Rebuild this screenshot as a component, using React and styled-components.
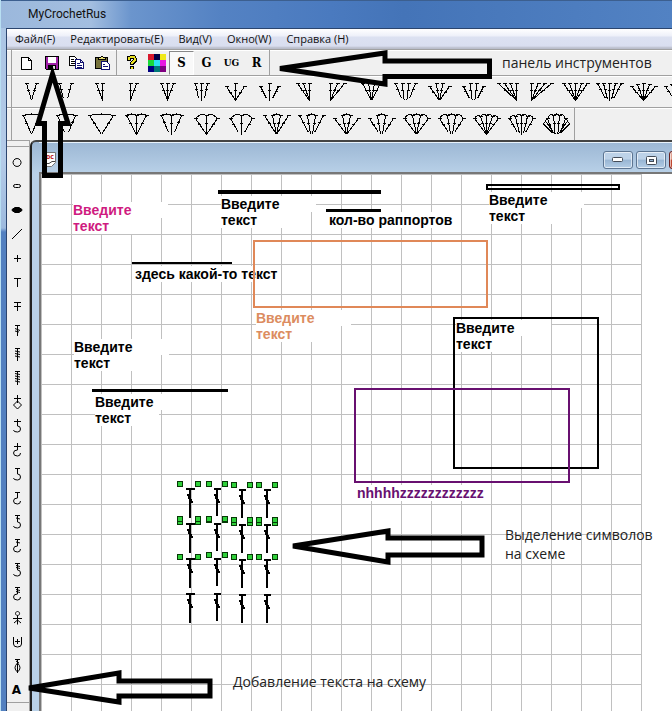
import React from "react";
import styled, { createGlobalStyle } from "styled-components";

const GlobalStyle = createGlobalStyle`
  * {
    box-sizing: border-box;
  }
  body {
    margin: 0;
    overflow: hidden;
    font-family: "Open Sans", "Noto Sans", sans-serif;
  }
  button {
    font: inherit;
    color: inherit;
    border: 0;
    padding: 0;
    background: none;
  }
`;

const Window = styled.div`
  position: relative;
  display: flex;
  flex-direction: column;
  height: 100vh;
  padding-left: 6px;
  overflow: hidden;
  background: linear-gradient(#a9c4e4 0, #b4cbe8 160px, #9dbade 228px, #5280c0 232px, #5280c0 100%);
  border-left: 1px solid #b8dff2;
`;

const TitleBar = styled.header`
  height: 28px;
  flex: none;
  margin-left: -6px;
  padding-left: 27px;
  border-top: 1px solid #3c5f8f;
  background: linear-gradient(90deg, #9bb8dc 0, #a3bee0 90px, #6b95cd 130px, #5482c3 220px, #4a7abf 330px, #4474b8 60%, #5282c3 100%);
`;

const Title = styled.h1`
  margin: 0;
  font-family: Roboto, "Open Sans", sans-serif;
  font-size: 12px;
  font-weight: 400;
  line-height: 26px;
  color: #111;
`;

const Body = styled.div`
  flex: 1;
  min-height: 0;
  display: flex;
  flex-direction: column;
  background: #f0f0f0;
  border-left: 1px solid #2b456e;
  border-top: 1px solid #2b456e;
  margin-left: -1px;
`;

const Menu = styled.nav`
  display: flex;
  gap: 15px;
  height: 20px;
  flex: none;
  padding-left: 8px;
  background: linear-gradient(#fff 0, #eef0f9 7px, #dce1f1 8px, #d9deef 17px, #b9bdca 19px);

  button {
    font-size: 11px;
    line-height: 20px;
    color: #111;
  }
`;

const ToolRow = styled.div`
  display: flex;
  align-items: center;
  flex: none;
  height: ${(p) => p.$height}px;
  padding-left: 2px;
  overflow: hidden;
  border-top: 1px solid #a0a0a0;
  box-shadow: inset 0 1px #fff;
`;

const Separator = styled.span`
  flex: none;
  width: 1px;
  height: 100%;
  margin: 0 ${(p) => p.$gap || 0}px;
  background: #a0a0a0;
`;

const ToolButton = styled.button`
  flex: none;
  display: flex;
  align-items: center;
  justify-content: center;
  width: 25px;
  height: 24px;
  font-family: "DejaVu Serif Condensed", "DejaVu Serif", serif;
  font-size: ${(p) => (p.$small ? 10 : 13)}px;
  font-weight: 700;
  ${(p) =>
    p.$pressed &&
    `
    background: #f9f9f9;
    border: 1px solid #fff;
    border-top-color: #888;
    border-left-color: #888;
  `}
`;

const StitchButton = styled.button`
  flex: none;
  width: ${(p) => p.$width}px;
  height: 30px;

  svg {
    display: block;
  }
`;

const Ink = styled.svg`
  fill: none;
  stroke: #000;
  stroke-width: 1;
  shape-rendering: ${(p) => (p.$smooth ? "auto" : "crispEdges")};
`;

const Workspace = styled.div`
  flex: 1;
  min-height: 0;
  display: flex;
`;

const Palette = styled.aside`
  flex: none;
  width: 23px;
  border-top: 1px solid #a0a0a0;
  border-right: 1px solid #a0a0a0;
`;

const PaletteTools = styled.div`
  display: flex;
  flex-direction: column;
  align-items: center;
  margin-top: 5px;
  padding: 3px 3px 0 0;
  border-top: 1px solid #a0a0a0;
  border-bottom: 1px solid #a0a0a0;

  button {
    width: 20px;
    height: 24px;
    font: 700 12px "DejaVu Sans", sans-serif;
  }
  svg {
    display: block;
  }
`;

const Child = styled.section`
  flex: 1;
  min-width: 0;
  display: flex;
  flex-direction: column;
  padding-left: 7px;
  border-left: 2px solid #222;
  border-top: 2px solid #444;
  border-top-left-radius: 6px;
  background: linear-gradient(#9cb7d4, #b9d1e8 32px, #b9d1e8);
`;

const ChildTitle = styled.div`
  display: flex;
  align-items: center;
  gap: 3px;
  flex: none;
  height: 30px;
  padding: 5px 0 0 5px;
  overflow: hidden;
  border-top: 1px solid #e8f2fb;
`;

const Spacer = styled.span`
  flex: 1;
`;

const CaptionButton = styled.button`
  flex: none;
  width: ${(p) => (p.$close ? 46 : 30)}px;
  height: 18px;
  display: flex;
  align-items: center;
  justify-content: center;
  margin-right: ${(p) => (p.$close ? -43 : 0)}px;
  border: 1px solid ${(p) => (p.$close ? "#6a2020" : "#5d7592")};
  border-radius: 3px;
  box-shadow: inset 0 0 0 1px rgba(255, 255, 255, 0.6);
  background: ${(p) =>
    p.$close
      ? "linear-gradient(#e0a090 45%, #c04830 50%)"
      : "linear-gradient(#bdd2e8 45%, #98b5d3 50%, #b4cde6)"};
`;

const Canvas = styled.main`
  position: relative;
  flex: 1;
  min-height: 0;
  overflow: hidden;
  background: #fff;
  border-left: 2px solid #777;
  border-top: 2px solid #777;
`;

const Paper = styled.div`
  width: 601px;
  height: 100%;
  background: linear-gradient(90deg, #c0c0c0 1px, transparent 1px) 0 0 / 30px 30px,
    linear-gradient(#c0c0c0 1px, transparent 1px) 0 0 / 30px 30px;
`;

const Label = styled.p`
  position: absolute;
  left: ${(p) => p.$x}px;
  top: ${(p) => p.$y}px;
  margin: 0;
  color: ${(p) => p.$color || "#000"};
  font: 700 14px/16px "Liberation Sans", Arial, sans-serif;
  white-space: nowrap;

  span {
    display: block;
    width: max-content;
    min-width: ${(p) => (p.$wide ? 64 : 0)}px;
    background: #fff;
  }
  span:first-child {
    min-width: ${(p) => (p.$wide ? 95 : 0)}px;
  }
`;

const Shape = styled.div`
  position: absolute;
  left: ${(p) => p.$x}px;
  top: ${(p) => p.$y}px;
  width: ${(p) => p.$w}px;
  height: ${(p) => p.$h}px;
  border: ${(p) => (p.$solid ? 0 : 2)}px solid ${(p) => p.$color || "#000"};
  background: ${(p) => (p.$solid ? "#000" : "none")};
`;

const Stitches = styled.svg`
  position: absolute;
  left: 0;
  top: 0;
  width: 601px;
  height: 537px;
  shape-rendering: crispEdges;
`;

const Arrows = styled.svg`
  position: absolute;
  left: 0;
  top: 0;
  width: 672px;
  height: 711px;
  fill: none;
  stroke: #000;
  stroke-width: 5;
  pointer-events: none;
`;

const Note = styled.p`
  position: absolute;
  left: ${(p) => p.$x}px;
  top: ${(p) => p.$y}px;
  margin: 0;
  font-size: 14px;
  line-height: 19px;
  color: #222;
  white-space: pre;
`;

// n: stems, w: half width, split: separate feet, fan: outer stems lower,
// lean: -1/1 for a one-sided bunch, arcs: "all" or "mid"
const topRow = [
  { n: 2, w: 5 },
  { n: 2, w: 6, split: 2 },
  { n: 2, w: 3, lean: -1 },
  { n: 2, w: 3, lean: 1 },
  { n: 3, w: 6 },
  { n: 3, w: 6, split: 3 },
  { n: 3, w: 9, fan: true },
  { n: 3, w: 9, fan: true, split: 3 },
  { n: 3, w: 6, lean: -1 },
  { n: 3, w: 7, lean: 1 },
  { n: 4, w: 9 },
  { n: 4, w: 10, split: 4 },
  { n: 4, w: 10, fan: true },
  { n: 4, w: 10, fan: true, split: 4 },
  { n: 4, w: 9, lean: -1 },
  { n: 4, w: 10, lean: 1 },
  { n: 5, w: 12 },
  { n: 5, w: 12, split: 4 },
  { n: 5, w: 12, fan: true },
  { n: 5, w: 12, fan: true, split: 4 },
];

const bottomRow = [
  { n: 2, w: 8, arcs: "all" },
  { n: 2, w: 9, arcs: "all", split: 2 },
  { n: 2, w: 12, arcs: "all" },
  { n: 3, w: 10, arcs: "all" },
  { n: 3, w: 10, arcs: "all", split: 3 },
  { n: 3, w: 11, arcs: "all", fan: true },
  { n: 3, w: 11, arcs: "all", fan: true, split: 3 },
  { n: 4, w: 12, arcs: "mid" },
  { n: 4, w: 12, arcs: "mid", split: 3 },
  { n: 4, w: 12, arcs: "mid", fan: true },
  { n: 4, w: 12, arcs: "mid", fan: true, split: 3 },
  { n: 4, w: 12, arcs: "all", fan: true },
  { n: 4, w: 12, arcs: "all", fan: true, split: 3 },
  { n: 5, w: 12, arcs: "all", fan: true },
  { n: 5, w: 12, arcs: "all", fan: true, split: 4 },
  { n: 4, w: 9, arcs: "all", fan: true, split: 4, puff: true },
];

const Fan = ({ n, w, split = 0, fan, lean, arcs, puff, width, top, foot }) => {
  const cx = Math.floor(width / 2) + 0.5;
  const stems = Array.from({ length: n }, (_, i) => {
    const t = (i / (n - 1)) * 2 - 1;
    const drop = fan ? Math.round(t * t * 3) : 0;
    return {
      x: cx + t * w,
      y: top + drop + 0.5,
      fx: lean ? cx - lean * w : cx + t * split,
      fy: foot + 0.5 - (split ? Math.round(t * t * 2) : 0),
    };
  });
  let d = "";
  stems.forEach(({ x, y, fx, fy }) => {
    d += `M${x} ${y}L${fx} ${fy}M${x - 1.5} ${y}h4`;
    d += `M${x + (fx - x) * 0.4 - 1.5} ${y + (fy - y) * 0.4}h3`;
  });
  stems.slice(1).forEach((s, i) => {
    const prev = stems[i];
    const mid = i === Math.floor((n - 1) / 2);
    if (arcs === "all" || (arcs === "mid" && mid)) {
      d += `M${prev.x} ${prev.y}Q${(prev.x + s.x) / 2} ${Math.min(prev.y, s.y) - 3} ${s.x} ${s.y}`;
    }
  });
  return (
    <Ink width={width} height="30" viewBox={`0 0 ${width} 30`}>
      <path d={d} />
      {puff && (
        <path
          d={`M${cx - 9} ${top + 3}L${cx - 13} 15L${cx - 4} 24M${cx + 9} ${top + 3}L${cx + 13} 15L${cx + 4} 24
            M${cx - 11} 12L${cx - 2} 25M${cx + 11} 12L${cx + 2} 25`}
        />
      )}
    </Ink>
  );
};

const hookRight = "q3 0 3 3t-3 3q-4 0-4-2";
const hookLeft = "q-4 0-4 3t4 3q3 0 3-3";

const paletteTools = [
  { name: "Воздушная петля", d: "M10 8.500a4 4 0 1 0 .1 0z" },
  { name: "Малая петля", d: "M8.500 10.500h3q2 0 2 1.500t-2 1.500h-3q-2 0-2-1.500t2-1.500z" },
  { name: "Соединительный столбик", d: "M8 9.500h4l3 2v1l-3 2h-4l-3-2v-1z", fill: true },
  { name: "Линия", d: "M5 17L15 7" },
  { name: "Столбик без накида", d: "M7 12.500h7M10.500 9v7" },
  { name: "Полустолбик", d: "M7 8.500h7M10.500 8v9" },
  { name: "Столбик с накидом", d: "M7 8.500h7M10.500 8v9M7 12.500h7" },
  { name: "Столбик с 2 накидами", d: "M8 7.500h5M10.500 7v11M8 10.500l5 2M8 13l4 1" },
  { name: "Столбик с 3 накидами", d: "M8 6.500h5M10.500 6v13M8 9l5 1M8 11.500l5 1M8 14l5 1" },
  { name: "Столбик с 4 накидами", d: "M8 5.500h5M10.500 5v14M8 7.500l5 1M8 10l5 1M8 12.500l5 1M8 15l5 1" },
  { name: "Ромб", d: "M7 8.500h7M10.500 5v8M10.500 11l-4 4l4 4l4-4z" },
  { name: "Рельефный вправо", d: "M7 7.500h7M10.500 5v7" + hookRight },
  { name: "Рельефный влево", d: "M7 8.500h7M10.500 5v7" + hookLeft },
  { name: "Крючок вправо", d: "M8 6.500h5M10.500 6v6" + hookRight },
  { name: "Крючок влево", d: "M8 6.500h5M10.500 6v6" + hookLeft },
  { name: "Крючок вправо, накид", d: "M8 5.500h5M10.500 5v7M9 8l4 1" + "M10.500 12" + hookRight },
  { name: "Крючок влево, накид", d: "M8 5.500h5M10.500 5v7M9 8l4 1" + "M10.500 12" + hookLeft },
  { name: "Крючок вправо, 2 накида", d: "M8 5.500h5M10.500 5v7M9 7.500l4 1M9 9.500l4 1M10.500 12" + hookRight },
  { name: "Крючок влево, 2 накида", d: "M8 5.500h5M10.500 5v7M9 7.500l4 1M9 9.500l4 1M10.500 12" + hookLeft },
  { name: "Рачий шаг", d: "M10.500 5.500a2 2 0 1 0 .1 0zM6 12.500h9M10.500 9.500v9M7 17l3.500-3l3.500 3" },
  { name: "Чаша", d: "M6.500 7v7q0 3 4 3t4-3V7M8 11.500h5M10.500 9v5" },
  { name: "Пышный столбик", d: "M8 5.500h5M10.500 5v14M9 7l3 2M10.500 9q-5 5 0 9M10.500 9q5 5 0 9" },
];

const labels = [
  { x: 32, y: 28, color: "#cf1b80" },
  { x: 180, y: 22 },
  { x: 448, y: 18 },
  { x: 288, y: 38, text: "кол-во раппортов" },
  { x: 94, y: 92, text: "здесь какой-то текст" },
  { x: 215, y: 136, color: "#dc8c60" },
  { x: 33, y: 165 },
  { x: 415, y: 146 },
  { x: 54, y: 220 },
  { x: 316, y: 311, color: "#681070", text: "nhhhhzzzzzzzzzzzz" },
];

const shapes = [
  { x: 177, y: 16, w: 163, h: 4, solid: true },
  { x: 285, y: 35, w: 55, h: 3, solid: true },
  { x: 91, y: 88, w: 100, h: 2, solid: true },
  { x: 51, y: 215, w: 136, h: 3, solid: true },
  { x: 445, y: 10, w: 134, h: 6 },
  { x: 212, y: 66, w: 235, h: 68, color: "#e08858" },
  { x: 412, y: 143, w: 146, h: 152 },
  { x: 313, y: 214, w: 216, h: 95, color: "#681070" },
];

const stitchColumns = [
  { x: 149, y: 314, len: 30, bar: 9 },
  { x: 176, y: 314, len: 28, bar: 7 },
  { x: 201, y: 315, len: 29, bar: 7 },
  { x: 226, y: 315, len: 29, bar: 7 },
];

const handlePairs = [
  { xs: [139, 157], ys: [310, 348, 345, 383] },
  { xs: [168, 184], ys: [310, 346, 345, 381] },
  { xs: [193, 209], ys: [311, 349, 346, 383] },
  { xs: [218, 234], ys: [311, 349, 346, 383] },
];

const colors = ["#d8182c", "#000048", "#f0e818", "#18d838", "#28e0f0", "#e818e0", "#000080", "#007878", "#800080"];

const DrawingArea = () => (
  <Canvas>
    <Paper />
    {labels.map(({ x, y, color, text }) => (
      <Label key={`${x}-${y}`} $x={x} $y={y} $color={color} $wide={!text}>
        <span>{text || "Введите"}</span>
        {!text && <span>текст</span>}
      </Label>
    ))}
    {shapes.map(({ x, y, w, h, color, solid }) => (
      <Shape key={`${x}-${y}`} $x={x} $y={y} $w={w} $h={h} $color={color} $solid={solid} />
    ))}
    <Stitches>
      {stitchColumns.map(({ x, y, len, bar }) =>
        [0, 35, 70, 105].map((dy) => (
          <g key={`${x}-${dy}`} transform={`translate(${x} ${y + dy})`}>
            <rect x={-(bar - 1) / 2} width={bar} height="2" />
            <rect x="-1" width="2" height={len} />
            <path d="M-3 6h2v3h-1v-1h-1zM-2 9h2v3h-1zM0 11h2v2h1v2h-2z" />
          </g>
        ))
      )}
      {handlePairs.map(({ xs, ys }) =>
        ys.map((y) =>
          xs.map((x) => (
            <rect key={`${x}-${y}`} x={x - 2.5} y={y - 2.5} width="5" height="5" fill="#2fd03a" stroke="#063806" />
          ))
        )
      )}
    </Stitches>
  </Canvas>
);

export default function App() {
  return (
    <Window>
      <GlobalStyle />
      <TitleBar>
        <Title>MyCrochetRus</Title>
      </TitleBar>
      <Body>
        <Menu>
          {["Файл(F)", "Редактировать(E)", "Вид(V)", "Окно(W)", "Справка (H)"].map((item) => (
            <button key={item}>{item}</button>
          ))}
        </Menu>

        <ToolRow $height={26}>
          <Separator $gap={2} />
          <ToolButton aria-label="Новый">
            <Ink width="13" height="16" viewBox="0 0 13 16">
              <path fill="#fff" d="M1.500 2.500h7l3 3v9h-10zM8.500 2.500v3h3" />
            </Ink>
          </ToolButton>
          <ToolButton aria-label="Сохранить">
            <Ink width="14" height="14" viewBox="0 0 14 14">
              <path fill="#a020a8" d="M.5.500h13v13h-12l-1-1z" />
              <path fill="#fff" stroke="none" d="M3 1h8v6H3z" />
              <path fill="#000" stroke="none" d="M3 9h8v5H3z" />
              <path fill="#ddd" stroke="none" d="M8 10h2v3H8z" />
            </Ink>
          </ToolButton>
          <ToolButton aria-label="Копировать">
            <Ink width="16" height="15" viewBox="0 0 16 15">
              <path fill="#fff" d="M.5 1.500h5l3 3v6h-8zM2 4.500h3M2 6.500h4M2 8.500h4" />
              <path fill="#fff" stroke="#101070" d="M6.500 4.500h5l3 3v6h-8zM11.500 4.500v3h3M8 8.500h3M8 10.500h5M8 12h5" />
            </Ink>
          </ToolButton>
          <ToolButton aria-label="Вставить">
            <Ink width="16" height="16" viewBox="0 0 16 16">
              <path fill="#77733c" d="M1.500 2.500h12v11h-12z" />
              <path fill="#e8e070" d="M4.500 4.500v-2h2l1-1h1l1 1h2v2z" />
              <path fill="#fff" stroke="#101070" d="M7.500 6.500h5l3 3v5h-8zM9 9.500h2M9 11.500h5" />
            </Ink>
          </ToolButton>
          <Separator $gap={2} />
          <ToolButton aria-label="Справка">
            <Ink width="12" height="15" viewBox="0 0 12 15">
              <path strokeWidth="4" d="M3 6V3l2-1h3l1 2v2L6 8v2M6 11v3" />
              <path stroke="#e8e020" strokeWidth="2" d="M3 5V3l2-1h3l1 2v1L6 8v1M6 12v2" />
            </Ink>
          </ToolButton>
          <ToolButton aria-label="Палитра">
            <svg width="18" height="18" viewBox="0 0 18 18" shapeRendering="crispEdges">
              {colors.map((c, i) => (
                <rect key={c} x={(i % 3) * 6} y={Math.floor(i / 3) * 6} width="6" height="6" fill={c} />
              ))}
            </svg>
          </ToolButton>
          <ToolButton $pressed>S</ToolButton>
          <ToolButton>G</ToolButton>
          <ToolButton $small>UG</ToolButton>
          <ToolButton>R</ToolButton>
          <Separator />
        </ToolRow>

        <ToolRow $height={32}>
          <Separator $gap={2} />
          {topRow.map((fan, i) => (
            <StitchButton key={i} $width={34} aria-label={`Раппорт ${i + 1}`}>
              <Fan {...fan} width={34} top={6} foot={23} />
            </StitchButton>
          ))}
        </ToolRow>

        <ToolRow $height={33}>
          <Separator $gap={2} />
          {bottomRow.map((fan, i) => (
            <StitchButton key={i} $width={35} aria-label={`Веер ${i + 1}`}>
              <Fan {...fan} width={35} top={6} foot={25} />
            </StitchButton>
          ))}
          <Separator />
        </ToolRow>

        <Workspace>
          <Palette>
            <PaletteTools>
              {paletteTools.map(({ name, d, fill }) => (
                <button key={name} aria-label={name}>
                  <Ink $smooth width="20" height="24" viewBox="0 0 20 24">
                    <path d={d} fill={fill ? "#000" : "none"} />
                  </Ink>
                </button>
              ))}
              <button>A</button>
            </PaletteTools>
          </Palette>

          <Child>
            <ChildTitle>
              <svg width="14" height="16" viewBox="0 0 14 16">
                <path fill="#fff" stroke="#777" d="M.5.500h11v10l-4 4h-7z" />
                <text x="2" y="7" fontSize="7" fontWeight="700" fill="#c02020">oc</text>
                <path fill="none" stroke="#444" d="M1 11.500h4l3-2h3" />
              </svg>
              <Spacer />
              <CaptionButton aria-label="Свернуть">
                <svg width="12" height="6">
                  <rect x=".5" y=".5" width="10" height="4" rx="1" fill="#fff" stroke="#444c58" />
                </svg>
              </CaptionButton>
              <CaptionButton aria-label="Развернуть">
                <svg width="11" height="9">
                  <rect x=".5" y=".5" width="10" height="8" rx="1" fill="#fff" stroke="#444c58" />
                  <rect x="3.500" y="3.500" width="4" height="2" fill="#8fb0d0" stroke="#444c58" />
                </svg>
              </CaptionButton>
              <CaptionButton $close aria-label="Закрыть" />
            </ChildTitle>
            <DrawingArea />
          </Child>
        </Workspace>
      </Body>

      <Arrows viewBox="0 0 672 711">
        <path d="M279 68.500L384 53v8h104.500v15.500H384V84z" />
        <path d="M51.500 74L67 123.500h-7.500v52h-16v-52H37z" />
        <path d="M292 546L387 531v7h94v17h-94v7z" />
        <path d="M28 688L118 673v8h91v15h-91v6z" />
      </Arrows>
      <Note $x={501} $y={53}>панель инструментов</Note>
      <Note $x={504} $y={525}>{"Выделение символов\nна схеме"}</Note>
      <Note $x={232} $y={672}>Добавление текста на схему</Note>
    </Window>
  );
}
